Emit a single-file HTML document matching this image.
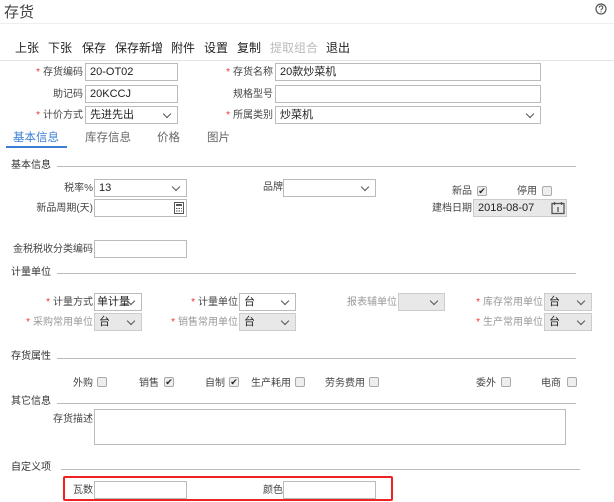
<!DOCTYPE html>
<html><head><meta charset="utf-8"><style>
*{margin:0;padding:0;box-sizing:border-box}
body{width:614px;height:502px;background:#fff;position:relative;overflow:hidden;font-family:"Liberation Sans","Noto Sans CJK SC",sans-serif;font-size:10px;color:#333}
.a{position:absolute;white-space:nowrap}
.l{position:absolute;text-align:right;white-space:nowrap;font-size:10px;color:#444;line-height:18px;padding-top:1px}
.l i{color:#e33;font-style:normal;margin-right:3px}
.g{color:#999}
.in{position:absolute;border:1px solid #bbb;background:#fff;height:18px;line-height:16px;padding-left:4px;font-size:11px;color:#222}
.sel:after{content:"";position:absolute;right:7px;top:4px;width:5px;height:5px;border-right:1.5px solid #555;border-bottom:1.5px solid #555;transform:rotate(45deg)}
.dis{background:#e8e8e8}
.hd{position:absolute;left:11px;font-size:10px;color:#333;line-height:14px}
.hr{position:absolute;height:1px;background:#bbb}
.cb{position:absolute;width:10px;height:10px;border:1px solid #aaa;border-radius:2px;background:#eee;font-size:9px;line-height:8px;text-align:center;color:#222}
.t{position:absolute;top:39px;font-size:12px;color:#222}
.c{position:absolute;top:374px;font-size:10px;color:#444}
</style></head><body>
<div class="a" style="left:4px;top:1px;font-size:15px;color:#444">存货</div>
<svg class="a" style="left:595px;top:3px" width="12" height="12" viewBox="0 0 12 12"><circle cx="6" cy="6" r="5" fill="none" stroke="#555" stroke-width="1.2"/><path d="M4.3 4.6a1.7 1.7 0 1 1 2.4 1.5c-.5.3-.7.6-.7 1.1" fill="none" stroke="#555" stroke-width="1.1"/><circle cx="6" cy="8.8" r=".6" fill="#555"/></svg>
<div class="hr" style="left:0;top:23px;width:614px;background:#eee"></div>
<div class="t" style="left:15px">上张</div><div class="t" style="left:48px">下张</div><div class="t" style="left:82px">保存</div><div class="t" style="left:115px">保存新增</div><div class="t" style="left:171px">附件</div><div class="t" style="left:204px">设置</div><div class="t" style="left:237px">复制</div><div class="t" style="left:270px;color:#bbb">提取组合</div><div class="t" style="left:326px">退出</div>
<div class="hr" style="left:0;top:60px;width:614px;background:#e4e4e4"></div>

<div class="l" style="right:531px;top:63px"><i>*</i>存货编码</div>
<div class="in" style="left:85px;top:63px;width:93px">20-OT02</div>
<div class="l" style="right:341px;top:63px"><i>*</i>存货名称</div>
<div class="in" style="left:275px;top:63px;width:266px">20款炒菜机</div>
<div class="l" style="right:531px;top:85px">助记码</div>
<div class="in" style="left:85px;top:85px;width:93px">20KCCJ</div>
<div class="l" style="right:341px;top:85px">规格型号</div>
<div class="in" style="left:275px;top:85px;width:266px"></div>
<div class="l" style="right:531px;top:106px"><i>*</i>计价方式</div>
<div class="in sel" style="left:85px;top:106px;width:93px">先进先出</div>
<div class="l" style="right:341px;top:106px"><i>*</i>所属类别</div>
<div class="in sel" style="left:275px;top:106px;width:266px">炒菜机</div>

<div class="a" style="left:13px;top:129px;font-size:11.5px;color:#3a7fd5">基本信息</div>
<div class="a" style="left:85px;top:129px;font-size:11.5px;color:#666">库存信息</div>
<div class="a" style="left:157px;top:129px;font-size:11.5px;color:#666">价格</div>
<div class="a" style="left:207px;top:129px;font-size:11.5px;color:#666">图片</div>
<div class="hr" style="left:6px;top:146px;width:61px;height:2px;background:#3a7fd5"></div>

<div class="hd" style="top:159px">基本信息</div><div class="hr" style="left:57px;top:166px;width:519px"></div>
<div class="l" style="right:521px;top:179px">税率%</div>
<div class="in sel" style="left:94px;top:179px;width:93px">13</div>
<div class="l" style="right:331px;top:178px">品牌</div>
<div class="in sel" style="left:283px;top:179px;width:93px"></div>
<div class="l" style="right:142px;top:182px">新品</div><div class="cb" style="left:477px;top:186px">✔</div>
<div class="l" style="right:77px;top:182px">停用</div><div class="cb" style="left:542px;top:186px"></div>
<div class="l" style="right:521px;top:199px">新品周期(天)</div>
<div class="in" style="left:94px;top:199px;width:93px"></div>
<svg class="a" style="left:174px;top:202px" width="10" height="12"><rect x=".5" y=".5" width="9" height="11" fill="none" stroke="#555"/><rect x="2" y="2" width="6" height="2" fill="#555"/><path d="M2 6.5h1.5M4.5 6.5h1.5M7 6.5h1M2 9h1.5M4.5 9h1.5M7 9h1" stroke="#555"/></svg>
<div class="l" style="right:142px;top:199px">建档日期</div>
<div class="in dis" style="left:473px;top:199px;width:94px;border-color:#ccc">2018-08-07</div>
<svg class="a" style="left:551px;top:201px" width="14" height="14"><rect x="1" y="2.5" width="12" height="10" fill="none" stroke="#555" stroke-width="1.3"/><path d="M3.5 1v3M10.5 1v3M7 6v5" stroke="#555" stroke-width="1.3"/></svg>
<div class="l" style="right:521px;top:240px">金税税收分类编码</div>
<div class="in" style="left:94px;top:240px;width:93px"></div>

<div class="hd" style="top:266px">计量单位</div><div class="hr" style="left:57px;top:273px;width:519px"></div>
<div class="l" style="right:521px;top:293px"><i>*</i>计量方式</div>
<div class="in sel" style="left:94px;top:293px;width:48px;padding-left:2px">单计量</div>
<div class="l" style="right:376px;top:293px"><i>*</i>计量单位</div>
<div class="in sel" style="left:239px;top:293px;width:57px">台</div>
<div class="l g" style="right:217px;top:293px">报表辅单位</div>
<div class="in sel dis" style="left:398px;top:293px;width:47px;border-color:#ccc"></div>
<div class="l g" style="right:71px;top:293px"><i>*</i>库存常用单位</div>
<div class="in sel dis" style="left:544px;top:293px;width:48px;border-color:#ccc">台</div>
<div class="l g" style="right:521px;top:313px"><i>*</i>采购常用单位</div>
<div class="in sel dis" style="left:94px;top:313px;width:48px;border-color:#ccc">台</div>
<div class="l g" style="right:376px;top:313px"><i>*</i>销售常用单位</div>
<div class="in sel dis" style="left:239px;top:313px;width:57px;border-color:#ccc">台</div>
<div class="l g" style="right:71px;top:313px"><i>*</i>生产常用单位</div>
<div class="in sel dis" style="left:544px;top:313px;width:48px;border-color:#ccc">台</div>

<div class="hd" style="top:350px">存货属性</div><div class="hr" style="left:57px;top:358px;width:519px"></div>
<div class="c" style="left:73px">外购</div><div class="cb" style="left:97px;top:377px"></div>
<div class="c" style="left:139px">销售</div><div class="cb" style="left:164px;top:377px">✔</div>
<div class="c" style="left:205px">自制</div><div class="cb" style="left:229px;top:377px">✔</div>
<div class="c" style="left:251px">生产耗用</div><div class="cb" style="left:295px;top:377px"></div>
<div class="c" style="left:325px">劳务费用</div><div class="cb" style="left:369px;top:377px"></div>
<div class="c" style="left:476px">委外</div><div class="cb" style="left:501px;top:377px"></div>
<div class="c" style="left:541px">电商</div><div class="cb" style="left:567px;top:377px"></div>

<div class="hd" style="top:395px">其它信息</div><div class="hr" style="left:57px;top:403px;width:519px"></div>
<div class="l" style="right:521px;top:410px">存货描述</div>
<div class="in" style="left:94px;top:409px;width:472px;height:36px"></div>

<div class="hd" style="top:461px">自定义项</div><div class="hr" style="left:61px;top:469px;width:519px"></div>
<div class="a" style="left:63px;top:476px;width:330px;height:25px;border:2px solid #e22;border-radius:2px"></div>
<div class="l" style="right:521px;top:481px">瓦数</div>
<div class="in" style="left:94px;top:481px;width:93px"></div>
<div class="l" style="right:331px;top:481px">颜色</div>
<div class="in" style="left:283px;top:481px;width:93px"></div>
</body></html>
